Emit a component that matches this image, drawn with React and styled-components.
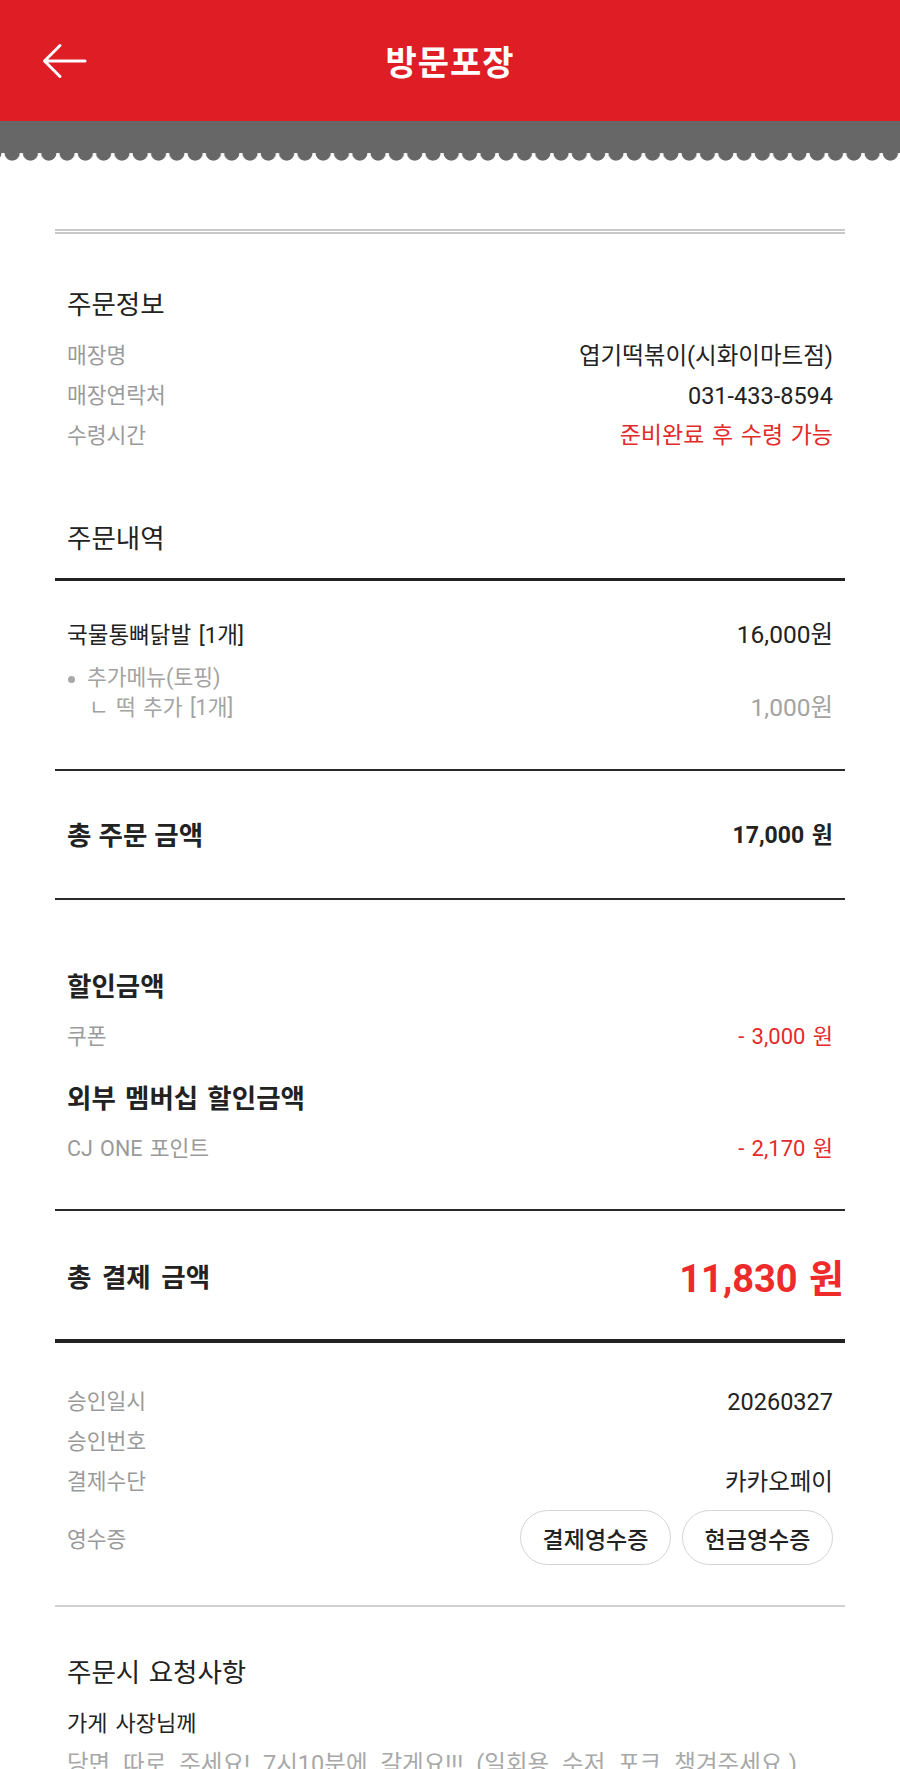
import React from "react";
import styled, { createGlobalStyle } from "styled-components";

const GlobalStyle = createGlobalStyle`
  html, body { margin: 0; padding: 0; background: #fff; }
  body {
    font-family: Roboto, "Noto Sans CJK KR", sans-serif;
    color: #222;
    word-spacing: 0.12em;
    -webkit-font-smoothing: antialiased;
  }
`;

const Header = styled.header`
  height: 121px;
  background: #de1d25;
  display: grid;
  grid-template-columns: 1fr auto 1fr;
  align-items: center;
`;

const BackButton = styled.button`
  justify-self: start;
  margin-left: 40px;
  padding: 0;
  border: 0;
  background: none;
  display: flex;
  align-items: center;
  cursor: pointer;
`;

const Title = styled.h1`
  margin: 0;
  color: #fff;
  font-family: "Noto Sans CJK KR", sans-serif;
  font-size: 34px;
  font-weight: 700;
  letter-spacing: 1px;
`;

const Band = styled.div`
  height: 32px;
  background: #676767;
`;

const Scallop = styled.div`
  height: 9px;
  background: radial-gradient(circle at 50% 0, #676767 7.2px, transparent 8px) 3px 0 / 18.3px 9px repeat-x;
`;

const Main = styled.main`
  padding: 0 55px;
`;

const DoubleRule = styled.div`
  margin-top: 67px;
  border-top: 5px double #c9c9c9;
`;

const Rule = styled.div`
  height: ${(p) => p.$w || 2}px;
  background: ${(p) => p.$c || "#2a2a2a"};
`;

const Block = styled.section`
  padding: ${(p) => p.$pt || 0}px 12px ${(p) => p.$pb || 0}px;
`;

const SectionTitle = styled.h2`
  margin: ${(p) => p.$mt || 0}px 0 0;
  font-size: 26.5px;
  font-weight: 400;
  line-height: 36px;
  color: #222;
`;

const BoldTitle = styled.h3`
  margin: ${(p) => p.$mt || 0}px 0 0;
  font-size: 26.5px;
  font-weight: 700;
  line-height: 36px;
  color: #222;
  word-spacing: 0.1em;
`;

const Rows = styled.div`
  margin-top: ${(p) => p.$mt || 0}px;
  display: flex;
  flex-direction: column;
`;

const Row = styled.div`
  display: flex;
  justify-content: space-between;
  align-items: center;
  line-height: ${(p) => p.$lh || 40}px;
  margin-top: ${(p) => p.$mt || 0}px;
`;

const Label = styled.span`
  font-size: 21.5px;
  color: #9a9a9a;
`;

const Value = styled.span`
  font-size: ${(p) => p.$size || 23.5}px;
  color: ${(p) => p.$color || "#222"};
`;

const ItemName = styled.span`
  font-size: 22.5px;
  color: #222;
`;

const SubItem = styled.span`
  display: flex;
  align-items: center;
  font-size: 21.5px;
  color: #a3a3a3;
  padding-left: ${(p) => p.$indent || 0}px;
`;

const Dot = styled.span`
  width: 7px;
  height: 7px;
  border-radius: 50%;
  background: #a8a8a8;
  margin: 2px 12px 0 1px;
`;

const SummaryRow = styled.div`
  height: ${(p) => p.$h}px;
  box-sizing: border-box;
  padding: 0 12px ${(p) => p.$pb || 0}px;
  display: flex;
  justify-content: space-between;
  align-items: center;
`;

const SummaryLabel = styled.span`
  font-size: 26.5px;
  font-weight: 700;
  color: #222;
  word-spacing: ${(p) => p.$ws || 0.1}em;
`;

const SummaryValue = styled.span`
  font-size: 23px;
  font-weight: 700;
  color: #222;
`;

const PayValue = styled.span`
  font-size: 38px;
  font-weight: 700;
  color: #ee2a2a;
  margin-right: -11px;
`;

const ReceiptRow = styled.div`
  margin-top: 8px;
  display: flex;
  justify-content: space-between;
  align-items: center;
`;

const ButtonGroup = styled.div`
  display: flex;
  gap: 11px;
`;

const PillButton = styled.button`
  width: 151px;
  height: 55px;
  border: 1.5px solid #d4d4d4;
  border-radius: 28px;
  background: #fff;
  font-family: inherit;
  font-size: 23px;
  font-weight: 500;
  color: #222;
  padding: 0;
`;

const Paragraph = styled.p`
  margin: ${(p) => p.$mt || 0}px 0 0;
  font-size: ${(p) => p.$size || 22}px;
  line-height: 34px;
  color: ${(p) => p.$color || "#222"};
  white-space: nowrap;
  word-spacing: ${(p) => p.$ws || 0.12}em;
`;

function ArrowLeft() {
  return (
    <svg width="48" height="36" viewBox="0 0 48 36" fill="none">
      <path
        d="M45 18H5M20 2.5L4.5 18L20 33.5"
        stroke="#fff"
        strokeWidth="3"
        strokeLinecap="round"
        strokeLinejoin="round"
      />
    </svg>
  );
}

export default function App() {
  return (
    <>
      <GlobalStyle />
      <Header>
        <BackButton aria-label="뒤로">
          <ArrowLeft />
        </BackButton>
        <Title>방문포장</Title>
        <span />
      </Header>
      <Band />
      <Scallop />
      <Main>
        <DoubleRule />

        <Block $pt={53}>
          <SectionTitle>주문정보</SectionTitle>
          <Rows $mt={13}>
            <Row>
              <Label>매장명</Label>
              <Value>엽기떡볶이(시화이마트점)</Value>
            </Row>
            <Row>
              <Label>매장연락처</Label>
              <Value>031-433-8594</Value>
            </Row>
            <Row>
              <Label>수령시간</Label>
              <Value $size={23} $color="#e32b2b">준비완료 후 수령 가능</Value>
            </Row>
          </Rows>
          <SectionTitle $mt={65}>주문내역</SectionTitle>
        </Block>
        <Block $pb={21} />
        <Rule $w={3} $c="#222" />

        <Block $pt={37} $pb={46}>
          <Row $lh={34}>
            <ItemName>국물통뼈닭발 [1개]</ItemName>
            <Value $size={24.5}>16,000원</Value>
          </Row>
          <Rows $mt={11}>
            <Row $lh={30}>
              <SubItem>
                <Dot />
                추가메뉴(토핑)
              </SubItem>
            </Row>
            <Row $lh={30}>
              <SubItem $indent={22}>ㄴ 떡 추가 [1개]</SubItem>
              <Value $size={24.5} $color="#a3a3a3">1,000원</Value>
            </Row>
          </Rows>
        </Block>
        <Rule />

        <SummaryRow $h={127} $pb={3}>
          <SummaryLabel $ws={0.02}>총 주문 금액</SummaryLabel>
          <SummaryValue>17,000 원</SummaryValue>
        </SummaryRow>
        <Rule />

        <Block $pt={69} $pb={42}>
          <BoldTitle>할인금액</BoldTitle>
          <Row $lh={36} $mt={14}>
            <Label>쿠폰</Label>
            <Value $size={22} $color="#e32b2b">- 3,000 원</Value>
          </Row>
          <BoldTitle $mt={26}>외부 멤버십 할인금액</BoldTitle>
          <Row $lh={36} $mt={14}>
            <Label>CJ ONE 포인트</Label>
            <Value $size={22} $color="#e32b2b">- 2,170 원</Value>
          </Row>
        </Block>
        <Rule />

        <SummaryRow $h={128}>
          <SummaryLabel $ws={0.15}>총 결제 금액</SummaryLabel>
          <PayValue>11,830 원</PayValue>
        </SummaryRow>
        <Rule $w={4} $c="#222" />

        <Block $pt={39} $pb={40}>
          <Rows>
            <Row>
              <Label>승인일시</Label>
              <Value>20260327</Value>
            </Row>
            <Row>
              <Label>승인번호</Label>
              <Value />
            </Row>
            <Row>
              <Label>결제수단</Label>
              <Value>카카오페이</Value>
            </Row>
          </Rows>
          <ReceiptRow>
            <Label>영수증</Label>
            <ButtonGroup>
              <PillButton>결제영수증</PillButton>
              <PillButton>현금영수증</PillButton>
            </ButtonGroup>
          </ReceiptRow>
        </Block>
        <Rule $w={2} $c="#d2d2d2" />

        <Block $pt={48}>
          <SectionTitle>주문시 요청사항</SectionTitle>
          <Paragraph $mt={16}>가게 사장님께</Paragraph>
          <Paragraph $mt={6} $size={23.5} $ws={0.3} $color="#a8a8a8">
            당면 따로 주세요! 7시10분에 갈게요!!! (일회용 수저 포크 챙겨주세요.)
          </Paragraph>
        </Block>
      </Main>
    </>
  );
}
